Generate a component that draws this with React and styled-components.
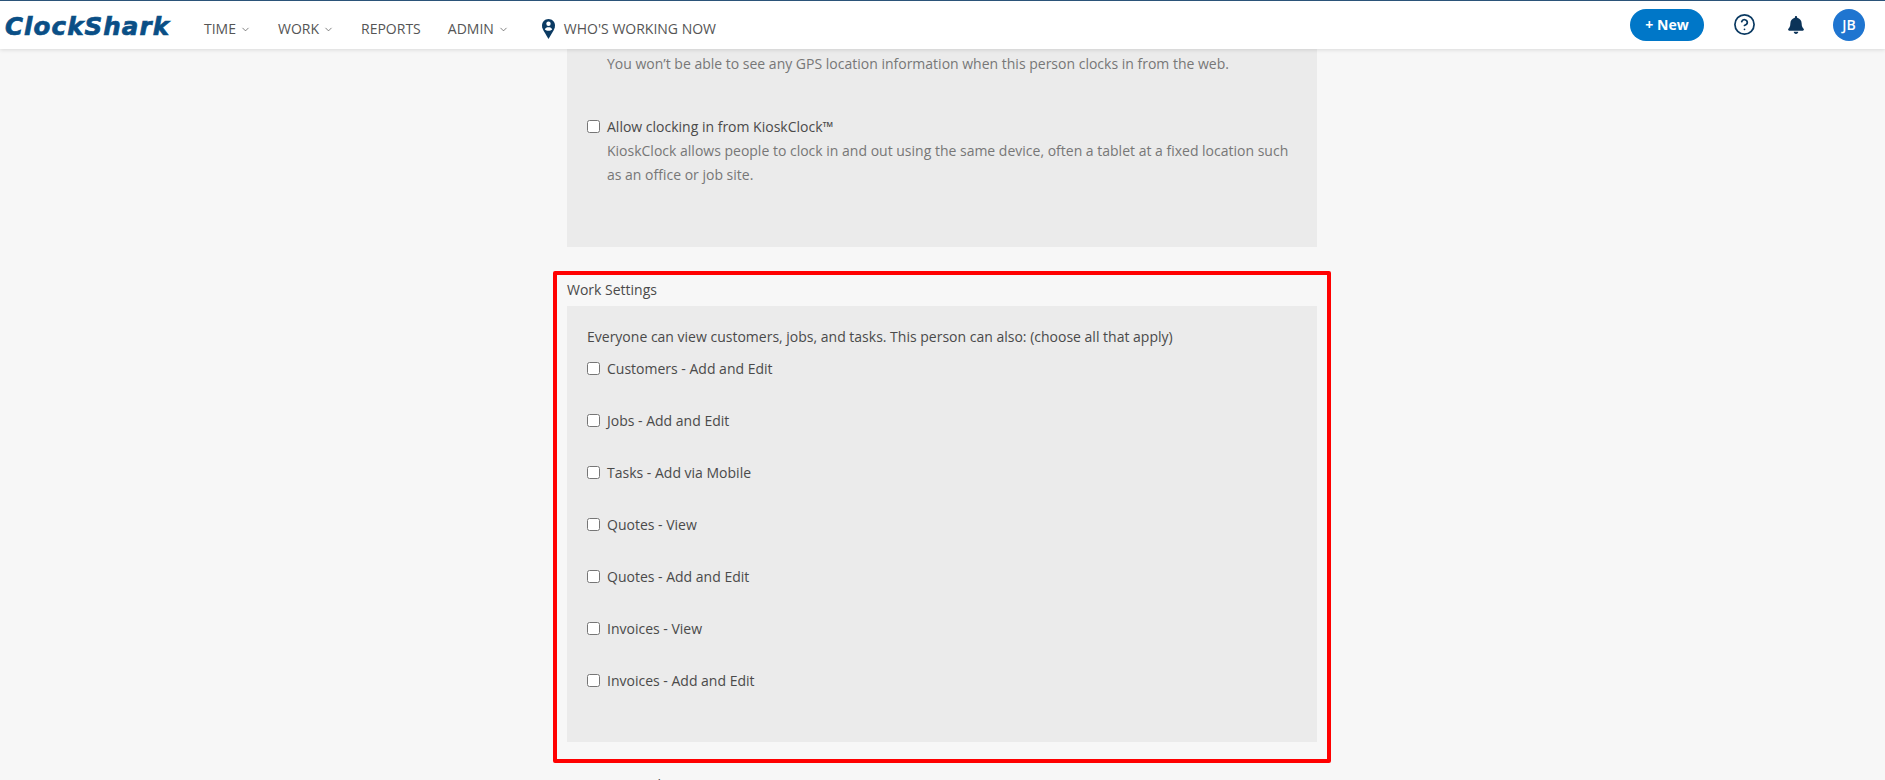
import React from "react";
import styled, { createGlobalStyle } from "styled-components";
import { ChevronDown, CircleHelp } from "lucide-react";
import { FaBell } from "react-icons/fa";

const GlobalStyle = createGlobalStyle`
  html, body {
    margin: 0;
    padding: 0;
    background: #f7f7f7;
  }
  body {
    font-family: "Open Sans", sans-serif;
    font-size: 14px;
    line-height: 24px;
    color: #4a4a4a;
  }
`;

const Page = styled.div`
  position: relative;
  height: 780px;
  overflow: hidden;
  background: #f7f7f7;
  padding-right: 1px;
`;

const Header = styled.header`
  position: absolute;
  top: 0;
  left: 0;
  right: 0;
  z-index: 5;
  height: 48px;
  display: flex;
  align-items: center;
  background: #fff;
  border-top: 1px solid #2b5379;
  box-shadow: 0 1px 4px rgba(0, 0, 0, 0.12);
`;

const Logo = styled.div`
  width: 204px;
  padding: 3px 0 0 5px;
  box-sizing: border-box;
  font-family: "DejaVu Sans", sans-serif;
  font-weight: 700;
  font-style: italic;
  font-size: 24.5px;
  line-height: 48px;
  letter-spacing: 1.1px;
  color: #0a4f86;
  -webkit-text-stroke: 0.7px #0a4f86;
`;

const Nav = styled.nav`
  display: flex;
  align-items: center;
  gap: 27px;
  padding-top: 8px;
`;

const NavItem = styled.a`
  display: flex;
  align-items: center;
  gap: 4px;
  font-size: 14px;
  font-weight: 400;
  color: #555;
  text-transform: uppercase;
  svg {
    color: #555;
  }
`;

const WhoItem = styled(NavItem)`
  gap: 9px;
  margin-left: 6px;
`;

const Actions = styled.div`
  margin-left: auto;
  display: flex;
  align-items: center;
  padding-right: 20px;
  margin-top: -1px;
`;

const NewButton = styled.button`
  width: 74px;
  height: 32px;
  border: 0;
  border-radius: 16px;
  background: #0077c8;
  color: #fff;
  font-family: inherit;
  font-size: 14px;
  font-weight: 700;
  margin-right: 29px;
`;

const HelpIcon = styled(CircleHelp)`
  color: #0b3a62;
  margin-right: 31px;
`;

const BellIcon = styled(FaBell)`
  color: #0b3358;
  margin-right: 28px;
`;

const Avatar = styled.div`
  width: 32px;
  height: 32px;
  border-radius: 50%;
  background: #1f75d0;
  color: #fff;
  font-size: 14px;
  font-weight: 600;
  display: flex;
  align-items: center;
  justify-content: center;
`;

const Main = styled.main`
  width: 750px;
  margin: 0 auto;
  padding-top: 9px;
`;

const Section = styled.section`
  position: relative;
  margin-bottom: 31px;
`;

const Highlight = styled.div`
  position: absolute;
  top: -7px;
  left: -14px;
  right: -14px;
  bottom: -21px;
  border: 4px solid #ff0000;
  border-radius: 2px;
  pointer-events: none;
`;

const SectionTitle = styled.h3`
  margin: 0 0 4px;
  font-size: 14px;
  font-weight: 400;
  line-height: 24px;
  color: #4a4a4a;
`;

const Panel = styled.div`
  background: #ebebeb;
  padding: 19px 20px 21px;
`;

const Intro = styled.p`
  margin: 0 0 8px;
`;

const Row = styled.div`
  display: flex;
  align-items: flex-start;
  margin-bottom: ${(p) => p.$gap}px;
`;

const Check = styled.input.attrs({ type: "checkbox" })`
  width: 13px;
  height: 13px;
  margin: 5px 7px 0 0;
  flex: none;
`;

const RowText = styled.div`
  display: flex;
  flex-direction: column;
`;

const Hint = styled.span`
  color: #777;
`;

const PinIcon = () => (
  <svg width="13" height="20" viewBox="0 0 13 20">
    <path
      d="M6.5 0C2.9 0 0 2.9 0 6.5c0 2.3 1 4.2 2.2 6.3L6.5 20l4.3-7.2C12 10.7 13 8.8 13 6.5 13 2.9 10.1 0 6.5 0z"
      fill="#0b3a62"
    />
    <circle cx="6.5" cy="4.8" r="2.2" fill="#fff" />
    <path d="M2.8 10.5c.5-1.7 2-2.3 3.7-2.3s3.2.6 3.7 2.3c-1 .9-2.3 1.3-3.7 1.3s-2.7-.4-3.7-1.3z" fill="#fff" />
  </svg>
);

const navItems = ["Time", "Work", "Reports", "Admin"];
const withMenu = { Time: true, Work: true, Admin: true };

const workOptions = [
  "Customers - Add and Edit",
  "Jobs - Add and Edit",
  "Tasks - Add via Mobile",
  "Quotes - View",
  "Quotes - Add and Edit",
  "Invoices - View",
  "Invoices - Add and Edit",
];

export default function App() {
  return (
    <Page>
      <GlobalStyle />
      <Header>
        <Logo>ClockShark</Logo>
        <Nav>
          {navItems.map((item) => (
            <NavItem key={item}>
              {item}
              {withMenu[item] && <ChevronDown size={11} strokeWidth={1.6} />}
            </NavItem>
          ))}
          <WhoItem>
            <PinIcon />
            Who's Working Now
          </WhoItem>
        </Nav>
        <Actions>
          <NewButton>+ New</NewButton>
          <HelpIcon size={23} strokeWidth={1.8} />
          <BellIcon size={18} />
          <Avatar>JB</Avatar>
        </Actions>
      </Header>
      <Main>
        <Section>
          <Panel>
            <Row $gap={39}>
              <Check />
              <RowText>
                <span>Allow clocking in from the web</span>
                <Hint>You won’t be able to see any GPS location information when this person clocks in from the web.</Hint>
              </RowText>
            </Row>
            <Row $gap={39}>
              <Check />
              <RowText>
                <span>Allow clocking in from KioskClock™</span>
                <Hint>
                  KioskClock allows people to clock in and out using the same device, often a tablet at a fixed location such as an office or job site.
                </Hint>
              </RowText>
            </Row>
          </Panel>
        </Section>
        <Section>
          <Highlight />
          <SectionTitle>Work Settings</SectionTitle>
          <Panel>
            <Intro>Everyone can view customers, jobs, and tasks. This person can also: (choose all that apply)</Intro>
            {workOptions.map((option) => (
              <Row key={option} $gap={28}>
                <Check />
                <span>{option}</span>
              </Row>
            ))}
          </Panel>
        </Section>
        <Section>
          <SectionTitle>Time Approval</SectionTitle>
        </Section>
      </Main>
    </Page>
  );
}
